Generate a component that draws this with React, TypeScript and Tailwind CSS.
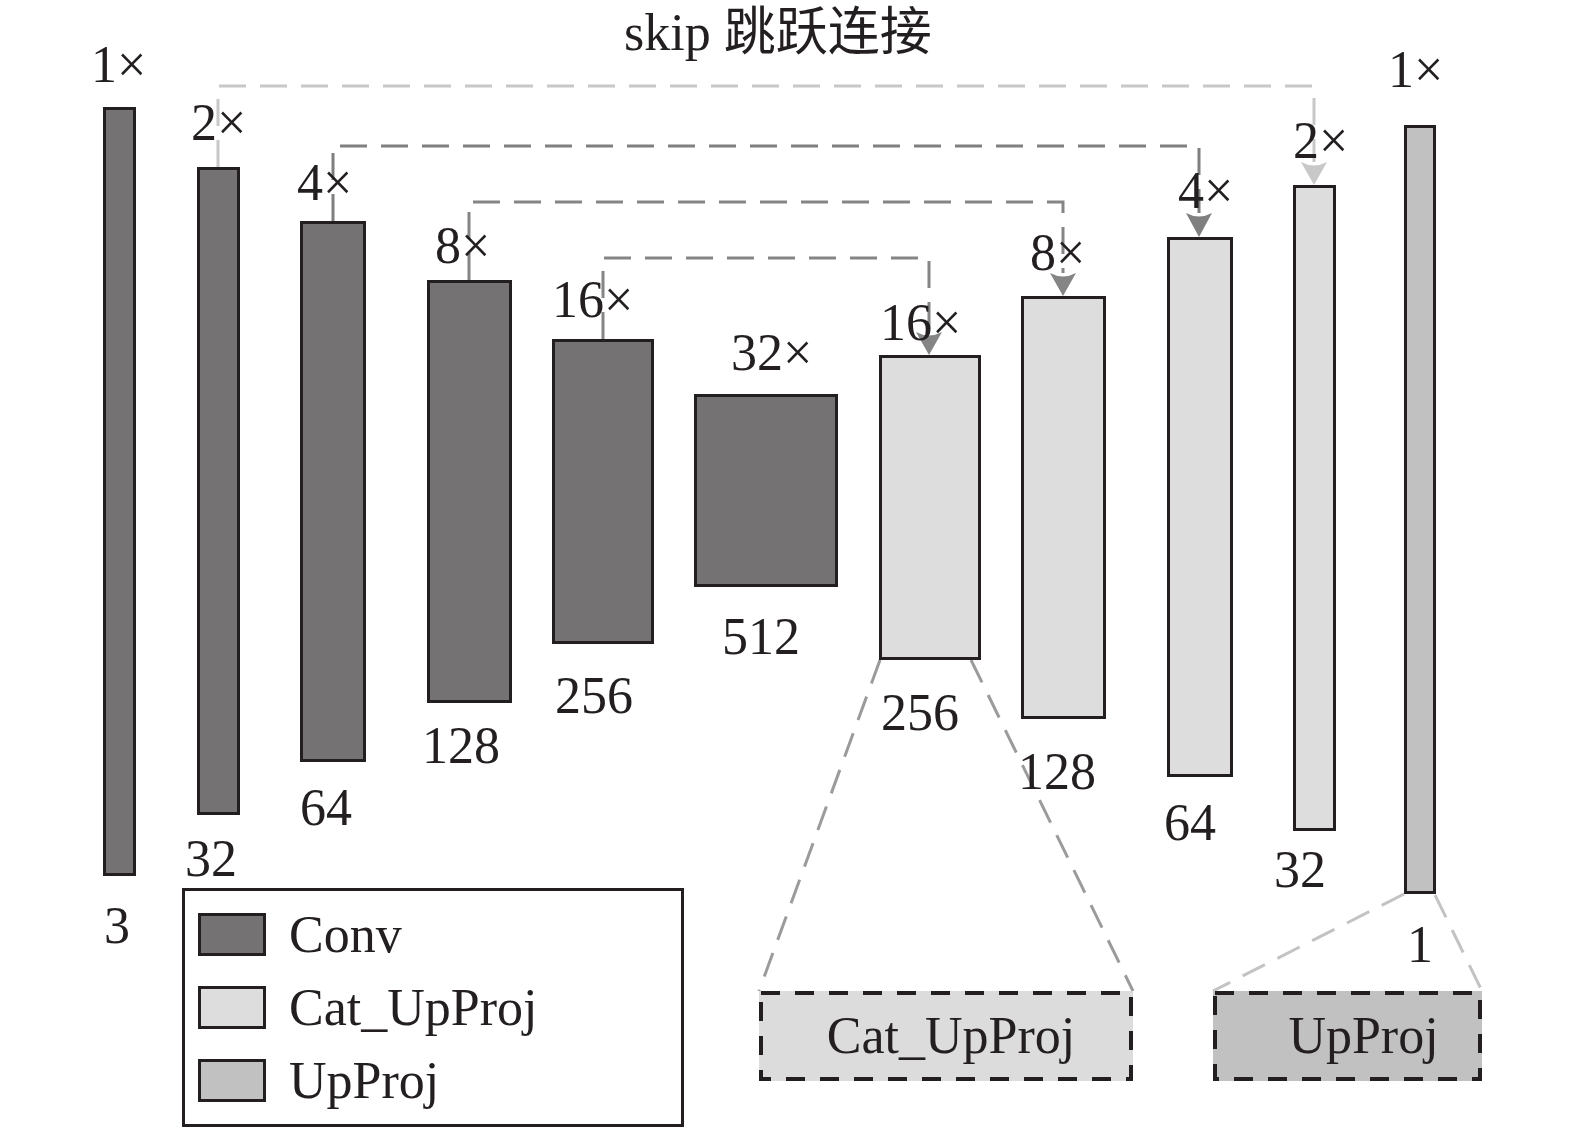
const ink = "#231f20";

type Bar = { kind: "conv" | "cat" | "up"; box: string };

const bars: Bar[] = [
  { kind: "conv", box: "left-[103px] top-[107px] w-[33px] h-[769px]" },
  { kind: "conv", box: "left-[197px] top-[167px] w-[43px] h-[648px]" },
  { kind: "conv", box: "left-[300px] top-[221px] w-[66px] h-[541px]" },
  { kind: "conv", box: "left-[427px] top-[280px] w-[85px] h-[423px]" },
  { kind: "conv", box: "left-[552px] top-[339px] w-[102px] h-[305px]" },
  { kind: "conv", box: "left-[694px] top-[394px] w-[144px] h-[193px]" },
  { kind: "cat", box: "left-[879px] top-[355px] w-[102px] h-[305px]" },
  { kind: "cat", box: "left-[1021px] top-[296px] w-[85px] h-[423px]" },
  { kind: "cat", box: "left-[1167px] top-[237px] w-[66px] h-[540px]" },
  { kind: "cat", box: "left-[1293px] top-[185px] w-[43px] h-[646px]" },
  { kind: "up", box: "left-[1404px] top-[125px] w-[32px] h-[769px]" },
];

const fill = {
  conv: "bg-[#747273]",
  cat: "bg-[#dddddd]",
  up: "bg-[#c1c1c1]",
};

// label text + its spot (baseline sits ~42px below top)
const labels: { text: string; at: string }[] = [
  { text: "1×", at: "left-[91px] top-[40px]" },
  { text: "2×", at: "left-[191px] top-[98px]" },
  { text: "4×", at: "left-[297px] top-[158px]" },
  { text: "8×", at: "left-[435px] top-[221px]" },
  { text: "16×", at: "left-[552px] top-[275px]" },
  { text: "32×", at: "left-[731px] top-[328px]" },
  { text: "16×", at: "left-[880px] top-[298px]" },
  { text: "8×", at: "left-[1030px] top-[228px]" },
  { text: "4×", at: "left-[1178px] top-[166px]" },
  { text: "2×", at: "left-[1293px] top-[116px]" },
  { text: "1×", at: "left-[1388px] top-[45px]" },
  { text: "3", at: "left-[104px] top-[901px]" },
  { text: "32", at: "left-[185px] top-[834px]" },
  { text: "64", at: "left-[300px] top-[783px]" },
  { text: "128", at: "left-[422px] top-[721px]" },
  { text: "256", at: "left-[555px] top-[671px]" },
  { text: "512", at: "left-[722px] top-[612px]" },
  { text: "256", at: "left-[881px] top-[688px]" },
  { text: "128", at: "left-[1018px] top-[747px]" },
  { text: "64", at: "left-[1164px] top-[798px]" },
  { text: "32", at: "left-[1274px] top-[845px]" },
  { text: "1", at: "left-[1407px] top-[920px]" },
];

const skips = [
  { d: "M218 167 L218 86 L1314 86 L1314 162", x: 1314, top: 162, tip: 185, color: "#c8c8c8" },
  { d: "M333 221 L333 146 L1199 146 L1199 213", x: 1199, top: 213, tip: 237, color: "#7f7f7f" },
  { d: "M469 280 L469 202 L1063 202 L1063 273", x: 1063, top: 273, tip: 296, color: "#858585" },
  { d: "M603 339 L603 258 L929 258 L929 332", x: 929, top: 332, tip: 355, color: "#858585" },
];

function Wires() {
  return (
    <svg className="absolute inset-0" width="1575" height="1132" viewBox="0 0 1575 1132">
      {skips.map((s) => (
        <g key={s.d}>
          <path d={s.d} fill="none" stroke={s.color} strokeWidth="3" strokeDasharray="27 14" />
          <path
            d={`M${s.x - 13} ${s.top} Q${s.x} ${s.top + 7} ${s.x + 13} ${s.top} L${s.x} ${s.tip} Z`}
            fill={s.color}
          />
        </g>
      ))}
      <g fill="none" strokeWidth="3" strokeDasharray="25 14">
        <path d="M880 660 L759 991 M971 660 L1133 991" stroke="#9b9b9b" />
        <path d="M1404 894 L1213 991 M1435 895 L1482 991" stroke="#c3c3c3" />
      </g>
    </svg>
  );
}

function DashedBox({ box, children }: { box: string; children: React.ReactNode }) {
  return (
    <div className={`absolute flex items-center justify-center ${box}`}>
      <svg className="absolute inset-0 h-full w-full">
        <rect
          x="2"
          y="2"
          width="calc(100% - 4px)"
          height="calc(100% - 4px)"
          fill="none"
          stroke={ink}
          strokeWidth="4"
          strokeDasharray="19 15"
        />
      </svg>
      <span className="relative text-[52px] leading-[50px]">{children}</span>
    </div>
  );
}

function Legend() {
  const rows = [
    { name: "Conv", swatch: "bg-[#747273]" },
    { name: "Cat_UpProj", swatch: "bg-[#dddddd]" },
    { name: "UpProj", swatch: "bg-[#c1c1c1]" },
  ];
  return (
    <div className="absolute left-[182px] top-[888px] flex h-[239px] w-[502px] flex-col border-[3px] border-[#231f20] pl-[13px] pt-[7px]">
      {rows.map((r) => (
        <div className="flex h-[73px] items-center gap-[23px]" key={r.name}>
          <div className={`h-[43px] w-[68px] border-[3px] border-[#231f20] ${r.swatch}`} />
          <span className="text-[52px] leading-[50px]">{r.name}</span>
        </div>
      ))}
    </div>
  );
}

export default function App() {
  return (
    <div className="relative h-[1132px] w-[1575px] overflow-hidden bg-white font-['Liberation_Serif','Noto_Sans_CJK_SC',serif] text-[#231f20]">
      <p className="absolute left-[624px] top-[8px] whitespace-nowrap text-[52px] leading-[50px]">
        skip 跳跃连接
      </p>

      <Wires />

      {bars.map((b) => (
        <div
          className={`absolute border-[3px] border-[#231f20] ${fill[b.kind]} ${b.box}`}
          key={b.box}
        />
      ))}

      {labels.map((l) => (
        <span
          className={`absolute whitespace-nowrap text-[52px] leading-[50px] ${l.at}`}
          key={l.at}
        >
          {l.text}
        </span>
      ))}

      <DashedBox box="left-[759px] top-[991px] w-[374px] h-[90px] bg-[#dcdcdc] pl-[10px]">Cat_UpProj</DashedBox>
      <DashedBox box="left-[1213px] top-[991px] w-[269px] h-[90px] bg-[#c1c1c1] pl-[32px]">UpProj</DashedBox>

      <Legend />
    </div>
  );
}
